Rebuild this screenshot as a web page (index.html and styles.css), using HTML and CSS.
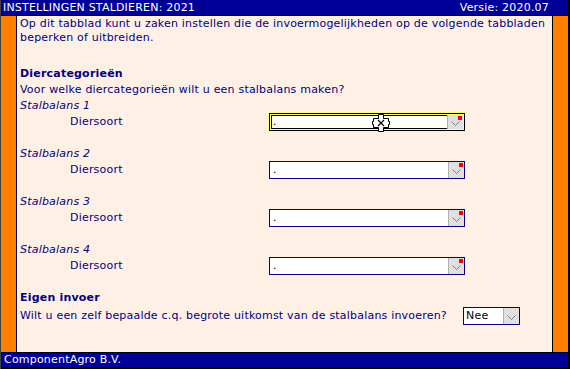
FILE: index.html
```html
<!DOCTYPE html>
<html lang="nl">
<head>
    <meta charset="UTF-8">
    <title>Instellingen staldieren</title>
    <link rel="stylesheet" href="styles.css">
</head>
<body>
<div class="window">
    <div class="titlebar">
        <span>INSTELLINGEN STALDIEREN: 2021</span>
        <span>Versie: 2020.07</span>
    </div>
    <div class="middle">
        <div class="side side-left"></div>
        <div class="content">
            <p class="intro">Op dit tabblad kunt u zaken instellen die de invoermogelijkheden op de volgende tabbladen beperken of uitbreiden.</p>

            <h2 class="kop">Diercategorieën</h2>
            <p class="vraag">Voor welke diercategorieën wilt u een stalbalans maken?</p>

            <div class="groep">
                <div class="balans">Stalbalans 1</div>
                <div class="rij">
                    <span class="label">Diersoort</span>
                    <div class="keuze focus">
                        <span class="waarde">.</span>
                        <span class="knop"><i class="verplicht"></i><svg width="9" height="5" viewBox="0 0 9 5"><path d="M0.5 0.5 L4.5 4.5 L8.5 0.5" fill="none" stroke="#808080" stroke-width="1"/></svg></span>
                        <svg class="cursor" width="20" height="18" viewBox="0 0 20 18">
                            <path d="M7.5 0.5 h5 v4 h5 v3 h1 v3 h-1 v3 h-5 v4 h-5 v-4 h-5 v-3 h-1 v-3 h1 v-3 h5 z" fill="#fff" stroke="#000" stroke-width="1"/>
                            <path d="M7 6 L13 12 M13 6 L7 12" stroke="#000" stroke-width="1.2"/>
                        </svg>
                    </div>
                </div>
            </div>

            <div class="groep">
                <div class="balans">Stalbalans 2</div>
                <div class="rij">
                    <span class="label">Diersoort</span>
                    <div class="keuze">
                        <span class="waarde">.</span>
                        <span class="knop"><i class="verplicht"></i><svg width="9" height="5" viewBox="0 0 9 5"><path d="M0.5 0.5 L4.5 4.5 L8.5 0.5" fill="none" stroke="#808080" stroke-width="1"/></svg></span>
                    </div>
                </div>
            </div>

            <div class="groep">
                <div class="balans">Stalbalans 3</div>
                <div class="rij">
                    <span class="label">Diersoort</span>
                    <div class="keuze">
                        <span class="waarde">.</span>
                        <span class="knop"><i class="verplicht"></i><svg width="9" height="5" viewBox="0 0 9 5"><path d="M0.5 0.5 L4.5 4.5 L8.5 0.5" fill="none" stroke="#808080" stroke-width="1"/></svg></span>
                    </div>
                </div>
            </div>

            <div class="groep">
                <div class="balans">Stalbalans 4</div>
                <div class="rij">
                    <span class="label">Diersoort</span>
                    <div class="keuze">
                        <span class="waarde">.</span>
                        <span class="knop"><i class="verplicht"></i><svg width="9" height="5" viewBox="0 0 9 5"><path d="M0.5 0.5 L4.5 4.5 L8.5 0.5" fill="none" stroke="#808080" stroke-width="1"/></svg></span>
                    </div>
                </div>
            </div>

            <h2 class="kop kop2">Eigen invoer</h2>
            <div class="rij2">
                <span>Wilt u een zelf bepaalde c.q. begrote uitkomst van de stalbalans invoeren?</span>
                <div class="keuze klein">
                    <span class="waarde">Nee</span>
                    <span class="knop"><svg width="9" height="5" viewBox="0 0 9 5"><path d="M0.5 0.5 L4.5 4.5 L8.5 0.5" fill="none" stroke="#808080" stroke-width="1"/></svg></span>
                </div>
            </div>
        </div>
        <div class="side side-right"></div>
    </div>
    <div class="footer">ComponentAgro B.V.</div>
</div>
</body>
</html>
```

FILE: styles.css
```css
*{
    margin:0;
    padding:0;
    box-sizing: border-box;
}
body{
    font-family: "DejaVu Sans", Verdana, sans-serif;
    font-size: 11px;
    line-height: 14px;
    letter-spacing: 0.2px;
    color: #000080;
    background: #fff;
}
.window{
    width: 570px;
    height: 369px;
    display: flex;
    flex-direction: column;
    border-left: 1px solid #404040;
    border-right: 2px solid #000;
}
.titlebar{
    height: 16px;
    background: #000099;
    color: #fff;
    border-bottom: 1px solid #000;
    display: flex;
    justify-content: space-between;
    padding: 0 19px 0 2px;
    line-height: 15px;
}
.middle{
    flex: 1;
    display: flex;
    min-height: 0;
}
.side{
    width: 16px;
    background: #ff8000;
}
.side-left{
    border-right: 1px solid #000;
}
.side-right{
    border-left: 1px solid #000;
}
.content{
    flex: 1;
    background: #fff0e6;
    padding: 1px 4px 0 3px;
}
.intro{
    margin-bottom: 22px;
}
.kop{
    font-size: 11px;
    font-weight: bold;
    margin-bottom: 2px;
}
.vraag{
    margin-bottom: 2px;
}
.groep{
    margin-bottom: 16px;
}
.balans{
    font-style: italic;
}
.rij{
    display: flex;
    align-items: center;
    height: 18px;
}
.label{
    width: 249px;
    padding-left: 50px;
}
.keuze{
    position: relative;
    width: 196px;
    height: 18px;
    background: #fff;
    border: 1px solid #000080;
    display: flex;
    align-items: stretch;
}
.keuze.focus{
    border-color: #000;
    box-shadow: inset 0 0 0 1px #ffff80;
    outline: 1px solid #ffff80;
    padding: 1px;
}
.waarde{
    flex: 1;
    padding-left: 3px;
    color: #000;
    line-height: 16px;
}
.focus .waarde{
    border: 1px solid #000;
    border-right: none;
    line-height: 12px;
    padding-left: 1px;
}
.knop{
    position: relative;
    width: 16px;
    background: #e0e0e0;
    border-left: 1px solid #b0b0b0;
    display: flex;
    align-items: center;
    justify-content: center;
    padding-top: 2px;
}
.verplicht{
    position: absolute;
    right: 1px;
    top: 1px;
    width: 4px;
    height: 4px;
    background: #ff0000;
}
.cursor{
    position: absolute;
    left: 101px;
    top: 0;
}
.rij2{
    display: flex;
    align-items: center;
    height: 18px;
}
.rij2 span:first-child{
    width: 443px;
}
.keuze.klein{
    width: 57px;
}
.klein .waarde{
    padding-left: 2px;
}
.footer{
    height: 17px;
    background: #000099;
    color: #fff;
    border-top: 1px solid #000;
    border-bottom: 2px solid #000;
    padding-left: 3px;
    line-height: 14px;
}
```
